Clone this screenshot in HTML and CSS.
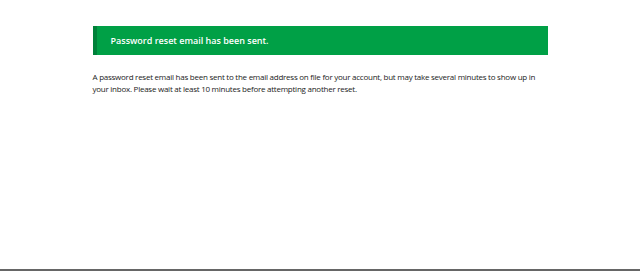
FILE: index.html
```html
<!DOCTYPE html>
<html lang="en">
  <head>
    <meta charset="UTF-8" />
    <meta name="viewport" content="width=device-width, initial-scale=1.0" />
    <title>Password reset</title>
    <link rel="stylesheet" href="styles.css">
  </head>

  <body>
    <main class="container">
      <div class="alert alert-success">Password reset email has been sent.</div>
      <p class="message">
        A password reset email has been sent to the email address on file for your account, but may take several minutes to show up in your inbox. Please wait at least 10 minutes before attempting another reset.
      </p>
    </main>
    <footer class="footer"></footer>
  </body>
</html>
```

FILE: styles.css
```css
html {
  box-sizing: border-box;
  font-family: "Open Sans", sans-serif;
  font-size: 9px;
}

*,
*:before,
*:after {
  box-sizing: inherit;
}

body {
  margin: 0;
  min-height: 100vh;
  display: flex;
  flex-direction: column;
  color: #222;
  background-color: #fff;
}

main {
  flex-grow: 1;
}

.container {
  margin-left: auto;
  margin-right: auto;
  width: 455px;
  padding-top: 26px;
}

.alert {
  height: 29px;
  display: flex;
  align-items: center;
  padding-left: 14px;
  color: #fff;
  font-weight: 600;
}

.alert-success {
  background-color: #00a046;
  border-left: 4px solid #00813a;
}

.message {
  margin: 16px 0 0;
  font-size: 8px;
  letter-spacing: -0.25px;
  line-height: 12px;
}

.footer {
  height: 2px;
  background-color: #666;
}
```
